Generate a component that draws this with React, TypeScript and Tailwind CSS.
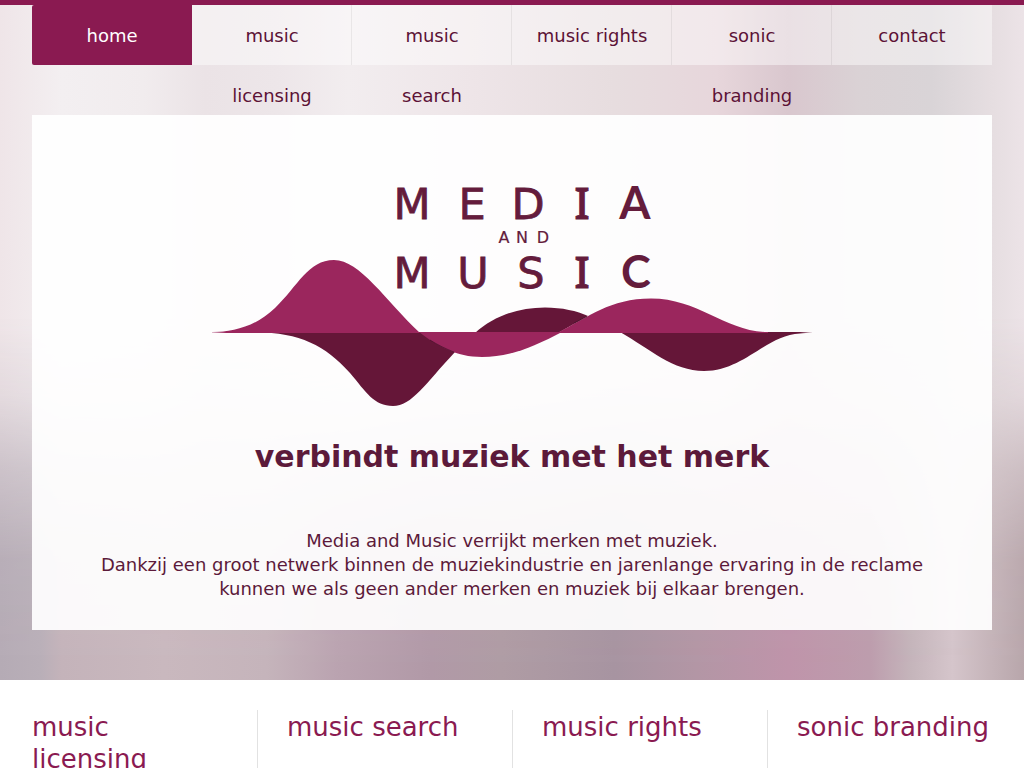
import React from 'react';

interface NavItem {
  label: string;
  href: string;
  active?: boolean;
}

const navItems: NavItem[] = [
  { label: 'home', href: '#home', active: true },
  { label: 'music licensing', href: '#licensing' },
  { label: 'music search', href: '#search' },
  { label: 'music rights', href: '#rights' },
  { label: 'sonic branding', href: '#branding' },
  { label: 'contact', href: '#contact' },
];

const services = ['music licensing', 'music search', 'music rights', 'sonic branding'];

const Logo: React.FC = () => (
  <svg viewBox="212 165 600 244" className="block w-full max-w-[600px]" role="img" aria-label="Media and Music">
    <defs>
      <linearGradient id="tipLeft" x1="210" x2="226" y1="0" y2="0" gradientUnits="userSpaceOnUse">
        <stop offset="0" stopColor="#9b265d" stopOpacity="0.2" />
        <stop offset="1" stopColor="#9b265d" />
      </linearGradient>
      <linearGradient id="tipRight" x1="800" x2="812" y1="0" y2="0" gradientUnits="userSpaceOnUse">
        <stop offset="0" stopColor="#651638" />
        <stop offset="1" stopColor="#651638" stopOpacity="0.2" />
      </linearGradient>
    </defs>

    {/* Wordmark */}
    <g className="fill-[#641c3c] stroke-[#641c3c] font-['DejaVu_Sans']" textAnchor="middle">
      <g fontSize="43" strokeWidth="0.8">
        <text y="219" x="412 472 528">MED</text>
        <text y="288" x="412 473 531">MUS</text>
      </g>
      <g fontSize="45" strokeWidth="0" className="font-['Lato'] font-bold">
        <text y="219" x="635">A</text>
        <text y="288" x="636">C</text>
      </g>
      <g fontSize="44" strokeWidth="0.8" className="font-['Noto_Sans'] font-medium">
        <text y="219" x="582">I</text>
        <text y="288" x="582">I</text>
      </g>
      <text y="243" x="504 522 543" fontSize="16" strokeWidth="0.2">AND</text>
    </g>

    {/* Dark wave */}
    <path d="M256 332C300 333 325 345 350 373C366 392 374 406 393 406C412 406 425 384 455 352L424 332Z" fill="#651638" />
    <path d="M475 333C494 316 518 307.500 545 307.500C562 307.500 577 311 588 316L558 333Z" fill="#651638" />
    <path d="M620 332C650 349 673 371 704 371C744 371 766 335 800 333.500L812 332.500V332Z" fill="url(#tipRight)" />

    {/* Light wave */}
    <path d="M212 332C233 332 255 327 275 308C298 286 308 260 334 260C360 260 385 300 420 333H212Z" fill="url(#tipLeft)" />
    <path d="M419 332H562C535 346 511 357 482 357C456 357 437 346 419 332Z" fill="#9b265d" />
    <path d="M557 333C589 317 610 298.500 651 298.500C699 298.500 726 332 768 332V333Z" fill="#9b265d" />

    {/* Shade where the waves cross */}
    <path d="M430 340C438 345 446 349 454 352M574 323L587 316.500" fill="none" stroke="#3a1024" strokeOpacity="0.6" />
  </svg>
);

const Nav: React.FC = () => (
  <nav className="h-[60px]">
    <ul className="grid grid-cols-6 h-full bg-white/45 rounded-l-[2px]">
      {navItems.map((item, i) => (
        <li
          key={item.label}
          className={i > 1 ? 'h-[60px] text-center shadow-[-1px_0_0_rgb(0_0_0/0.06)]' : 'h-[60px] text-center'}
        >
          <a
            href={item.href}
            className={
              item.active
                ? 'block h-[60px] px-[22px] pt-px leading-[60px] rounded-l-[2px] bg-[#8a1a51] text-white'
                : 'block h-[60px] px-[22px] pt-px leading-[60px] text-[#5c1236]'
            }
          >
            {item.label}
          </a>
        </li>
      ))}
    </ul>
  </nav>
);

export default function App() {
  return (
    <div className="h-screen overflow-hidden bg-white font-['DejaVu_Sans',sans-serif] text-lg text-[#5c1a3a]">
      <header className="relative border-t-[5px] border-[#8a1a51] px-8 pb-[50px] bg-[linear-gradient(90deg,#b5abb5_0%,#b9afb8_4%,#c4b3ba_6%,#c9b8be_16%,#c5b4bb_26%,#baa3b0_33%,#b199a7_42%,#af9ca4_49%,#a794a1_60%,#b396a5_68%,#bf94aa_77%,#bd9dad_85%,#c5b5bb_89%,#d5c5cb_93%,#c4b3b8_97%,#b8a6ab_100%)]">
        {/* Paler upper half of the backdrop */}
        <div className="absolute inset-0 bg-[linear-gradient(90deg,#efe5e8_0%,#f3eff1_6%,#f1ecee_14%,#ebe3e6_20%,#ede6e9_27%,#f2edef_34%,#eee5e8_46%,#e7dddf_60%,#e7d6db_70%,#d9c7ce_77%,#dad2d5_84%,#d9d4d7_91%,#e6dee1_97%,#ece3e7_100%)] [mask-image:linear-gradient(#000_46%,#000c_58%,#0006_69%,#0001_82%,#0000_100%)]" />

        <div className="relative">
          <Nav />
          <section className="mt-[50px] flex flex-col items-center bg-white/92 px-8 pt-[50px] pb-[29px] text-center">
            <Logo />
            <h1 className="mt-[28px] text-[30px] leading-[40px] font-bold">verbindt muziek met het merk</h1>
            <p className="mt-[52px] leading-6">
              Media and Music verrijkt merken met muziek.
              <br />
              Dankzij een groot netwerk binnen de muziekindustrie en jarenlange ervaring in de reclame
              <br />
              kunnen we als geen ander merken en muziek bij elkaar brengen.
            </p>
          </section>
        </div>
      </header>

      <main className="grid grid-cols-4 gap-x-[60px] px-8 pt-[30px]">
        {services.map((title) => (
          <section
            key={title}
            className="h-[300px] -mr-[31px] pr-[30px] border-r border-[#e2e2e2] last:mr-0 last:pr-0 last:border-r-0"
          >
            <h2 className="pt-px text-[26px] leading-8 text-[#8a1a51]">{title}</h2>
          </section>
        ))}
      </main>
    </div>
  );
}
